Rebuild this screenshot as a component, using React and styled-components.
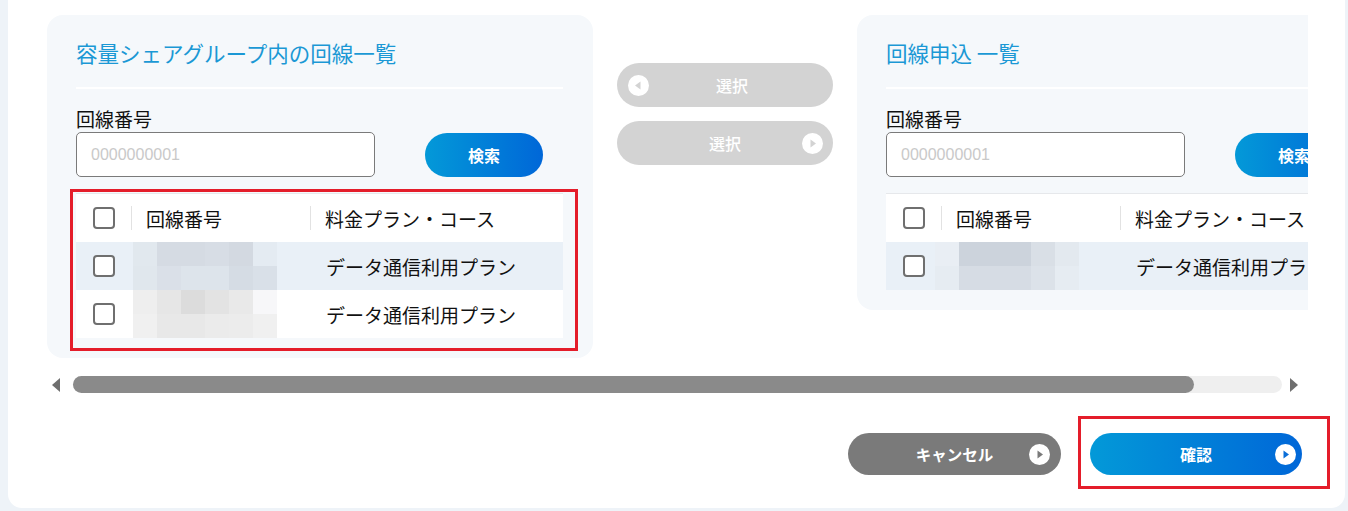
import React from "react";
import styled, { createGlobalStyle } from "styled-components";

const GlobalStyle = createGlobalStyle`
  html, body {
    margin: 0;
    padding: 0;
    background: #eef3f8;
  }
  body {
    font-family: "Noto Sans CJK JP", "Noto Sans", sans-serif;
    color: #222;
  }
  * { box-sizing: border-box; }
`;

const BLUE = "linear-gradient(90deg, #0399d8 0%, #0067d8 100%)";

const mosaicLeft = [
  ["#e1e8ee", "#d5dbe3", "#d5dbe3", "#d7dde5", "#d3d9e1", "#e4ebf2"],
  ["#e0e7ed", "#dae0e8", "#dde4eb", "#dde4eb", "#d5dce4", "#d9e0e8"],
  ["#eeeeee", "#e6e6e6", "#dcdcdc", "#e3e3e3", "#e9e9e9", "#f7f7f9"],
  ["#f0f0f0", "#e8e8e8", "#e8e8e8", "#ebebeb", "#ececec", "#f0f0f0"],
];

const mosaicRight = [
  ["#e9eef4", "#ccd3dc", "#ccd3dc", "#ccd3dc", "#d9dfe6", "#e3e9ef"],
  ["#e6ecf2", "#d6dce4", "#d6dce4", "#d6dce4", "#dce2e9", "#e6ecf2"],
];

const panels = [
  {
    title: "容量シェアグループ内の回線一覧",
    rows: [mosaicLeft.slice(0, 2), mosaicLeft.slice(2, 4)],
    highlight: true,
    mosaicShift: 2,
  },
  {
    title: "回線申込 一覧",
    rows: [mosaicRight],
    highlight: false,
    mosaicShift: -6,
  },
];

const Card = styled.div`
  margin: 0 3px 0 8px;
  background: #fff;
  border-radius: 0 0 14px 14px;
  padding: 15px 43px 33px 39px;
  height: 508px;
`;

const Viewport = styled.div`
  width: 1261px;
  overflow-x: auto;
  scrollbar-width: none;
  &::-webkit-scrollbar { display: none; }
`;

const Track = styled.div`
  display: flex;
  align-items: flex-start;
  gap: 24px;
  width: 1360px;
`;

const Panel = styled.section`
  flex: 0 0 546px;
  background: #f5f8fb;
  border-radius: 16px;
  padding: 22px 30px 20px 29px;
`;

const Title = styled.h2`
  margin: 0;
  font-size: 21.5px;
  line-height: 31px;
  font-weight: 400;
  color: #1b98d5;
`;

const Divider = styled.hr`
  margin: 19px 0 0;
  border: 0;
  height: 2px;
  background: #fff;
`;

const Label = styled.div`
  margin-top: 18px;
  font-size: 19px;
  line-height: 24px;
  color: #111;
`;

const SearchRow = styled.div`
  margin-top: 1px;
  display: flex;
  align-items: center;
  gap: 50px;
`;

const Input = styled.input`
  width: 299px;
  height: 45px;
  border: 1px solid #7a7a7a;
  border-radius: 5px;
  background: #fff;
  padding: 0 14px;
  font-family: "Liberation Sans", Arial, sans-serif;
  font-size: 16px;
  outline: none;
  &::placeholder { color: #c9c9c9; }
`;

const SearchButton = styled.button`
  width: 118px;
  height: 44px;
  border: 0;
  border-radius: 22px;
  background: ${BLUE};
  color: #fff;
  font-family: "Noto Sans CJK JP", sans-serif;
  font-size: 16px;
  font-weight: 700;
  cursor: pointer;
  flex: 0 0 auto;
`;

const TableWrap = styled.div`
  position: relative;
  margin-top: 16px;
  ${(p) =>
    p.$highlight &&
    `&::after {
      content: "";
      position: absolute;
      inset: -4px -15px -13px -6px;
      border: 3px solid #e41d2a;
      pointer-events: none;
    }`}
`;

const Table = styled.div`
  background: #fff;
  border-top: 1px solid #e6e8eb;
`;

const Row = styled.div`
  display: grid;
  grid-template-columns: 55px 179px 1fr;
  align-items: center;
  height: 48px;
  background: ${(p) => (p.$shade ? "#e9f0f7" : "#fff")};
`;

const CheckCell = styled.div`
  display: flex;
  justify-content: center;
`;

const Check = styled.span`
  display: block;
  width: 22px;
  height: 22px;
  border: 2px solid #6f6f6f;
  border-radius: 4px;
  background: #fff;
`;

const HeadCell = styled.div`
  height: 24px;
  display: flex;
  align-items: center;
  border-left: 1px solid #e2e2e2;
  padding-left: 14px;
  font-size: 19px;
  color: #111;
  white-space: nowrap;
`;

const Cell = styled.div`
  padding-left: 16px;
  font-size: 19px;
  color: #111;
  white-space: nowrap;
  overflow: hidden;
`;

const Mosaic = styled.div`
  margin-left: ${(p) => p.$shift}px;
  display: grid;
  grid-template-columns: repeat(6, 24px);
  grid-auto-rows: 24px;
`;

const Block = styled.span`
  background: ${(p) => p.$c};
`;

const Middle = styled.div`
  flex: 0 0 216px;
  padding-top: 48px;
  display: flex;
  flex-direction: column;
  gap: 14px;
`;

const PillButton = styled.button`
  display: grid;
  grid-template-columns: 21px 1fr 21px;
  align-items: center;
  width: ${(p) => p.$w}px;
  height: ${(p) => p.$h}px;
  padding: 0 ${(p) => p.$pad}px;
  border: 0;
  border-radius: 999px;
  background: ${(p) => p.$bg};
  color: #fff;
  font-family: "Noto Sans CJK JP", sans-serif;
  font-size: ${(p) => p.$fs}px;
  font-weight: ${(p) => p.$fw};
  cursor: default;
`;

const BtnText = styled.span`
  text-align: center;
  padding-left: ${(p) => p.$shift || 0}px;
`;

const Scrollbar = styled.div`
  margin-top: 18px;
  width: 1261px;
  display: flex;
  align-items: center;
  padding: 0 10px 0 5px;
  gap: 10px;
`;

const Arrow = styled.span`
  width: 0;
  height: 0;
  border-top: 7px solid transparent;
  border-bottom: 7px solid transparent;
  ${(p) =>
    p.$dir === "left"
      ? "border-right: 8px solid #6f6f6f;"
      : "border-left: 8px solid #6f6f6f;"}
`;

const Rail = styled.div`
  flex: 1;
  height: 17px;
  border-radius: 9px;
  background: #efefef;
  margin: 0 -2px 0 3px;
`;

const Thumb = styled.div`
  height: 100%;
  border-radius: 9px;
  background: #8a8a8a;
`;

const Footer = styled.div`
  margin-top: 40px;
  display: flex;
  justify-content: flex-end;
  gap: 29px;
`;

const Highlight = styled.div`
  position: relative;
  &::after {
    content: "";
    position: absolute;
    inset: -17px -28px -14px -12px;
    border: 3px solid #e41d2a;
    pointer-events: none;
  }
`;

const PlayIcon = ({ color, left }) => (
  <svg width="21" height="21" viewBox="0 0 21 21">
    <circle cx="10.5" cy="10.5" r="10.5" fill="#fff" />
    {left ? (
      <polygon points="12.5,6.5 12.5,14.5 7,10.5" fill={color} />
    ) : (
      <polygon points="8.5,6.5 8.5,14.5 14,10.5" fill={color} />
    )}
  </svg>
);

const ListPanel = ({ title, rows, highlight, mosaicShift }) => (
  <Panel>
    <Title>{title}</Title>
    <Divider />
    <Label>回線番号</Label>
    <SearchRow>
      <Input placeholder="0000000001" />
      <SearchButton>検索</SearchButton>
    </SearchRow>
    <TableWrap $highlight={highlight}>
      <Table>
        <Row>
          <CheckCell>
            <Check />
          </CheckCell>
          <HeadCell>回線番号</HeadCell>
          <HeadCell>料金プラン・コース</HeadCell>
        </Row>
        {rows.map((blocks, i) => (
          <Row key={i} $shade={i % 2 === 0}>
            <CheckCell>
              <Check />
            </CheckCell>
            <Mosaic $shift={mosaicShift}>
              {blocks.flat().map((c, j) => (
                <Block key={j} $c={c} />
              ))}
            </Mosaic>
            <Cell>データ通信利用プラン</Cell>
          </Row>
        ))}
      </Table>
    </TableWrap>
  </Panel>
);

export default function App() {
  return (
    <>
      <GlobalStyle />
      <Card>
        <Viewport>
          <Track>
            <ListPanel {...panels[0]} />
            <Middle>
              <PillButton $w={216} $h={44} $pad={11} $bg="#d3d3d3" $fs={16} $fw={500}>
                <PlayIcon color="#d3d3d3" left />
                <BtnText $shift={14}>選択</BtnText>
                <span />
              </PillButton>
              <PillButton $w={216} $h={44} $pad={10} $bg="#d3d3d3" $fs={16} $fw={500}>
                <span />
                <BtnText>選択</BtnText>
                <PlayIcon color="#d3d3d3" />
              </PillButton>
            </Middle>
            <ListPanel {...panels[1]} />
          </Track>
        </Viewport>
        <Scrollbar>
          <Arrow $dir="left" />
          <Rail>
            <Thumb style={{ width: "92.7%" }} />
          </Rail>
          <Arrow $dir="right" />
        </Scrollbar>
        <Footer>
          <PillButton $w={213} $h={42} $pad={11} $bg="#7a7a7a" $fs={15.5} $fw={700}>
            <span />
            <BtnText>キャンセル</BtnText>
            <PlayIcon color="#7a7a7a" />
          </PillButton>
          <Highlight>
            <PillButton $w={212} $h={42} $pad={6} $bg={BLUE} $fs={16} $fw={700}>
              <span />
              <BtnText>確認</BtnText>
              <PlayIcon color="#0a6ed8" />
            </PillButton>
          </Highlight>
        </Footer>
      </Card>
    </>
  );
}
